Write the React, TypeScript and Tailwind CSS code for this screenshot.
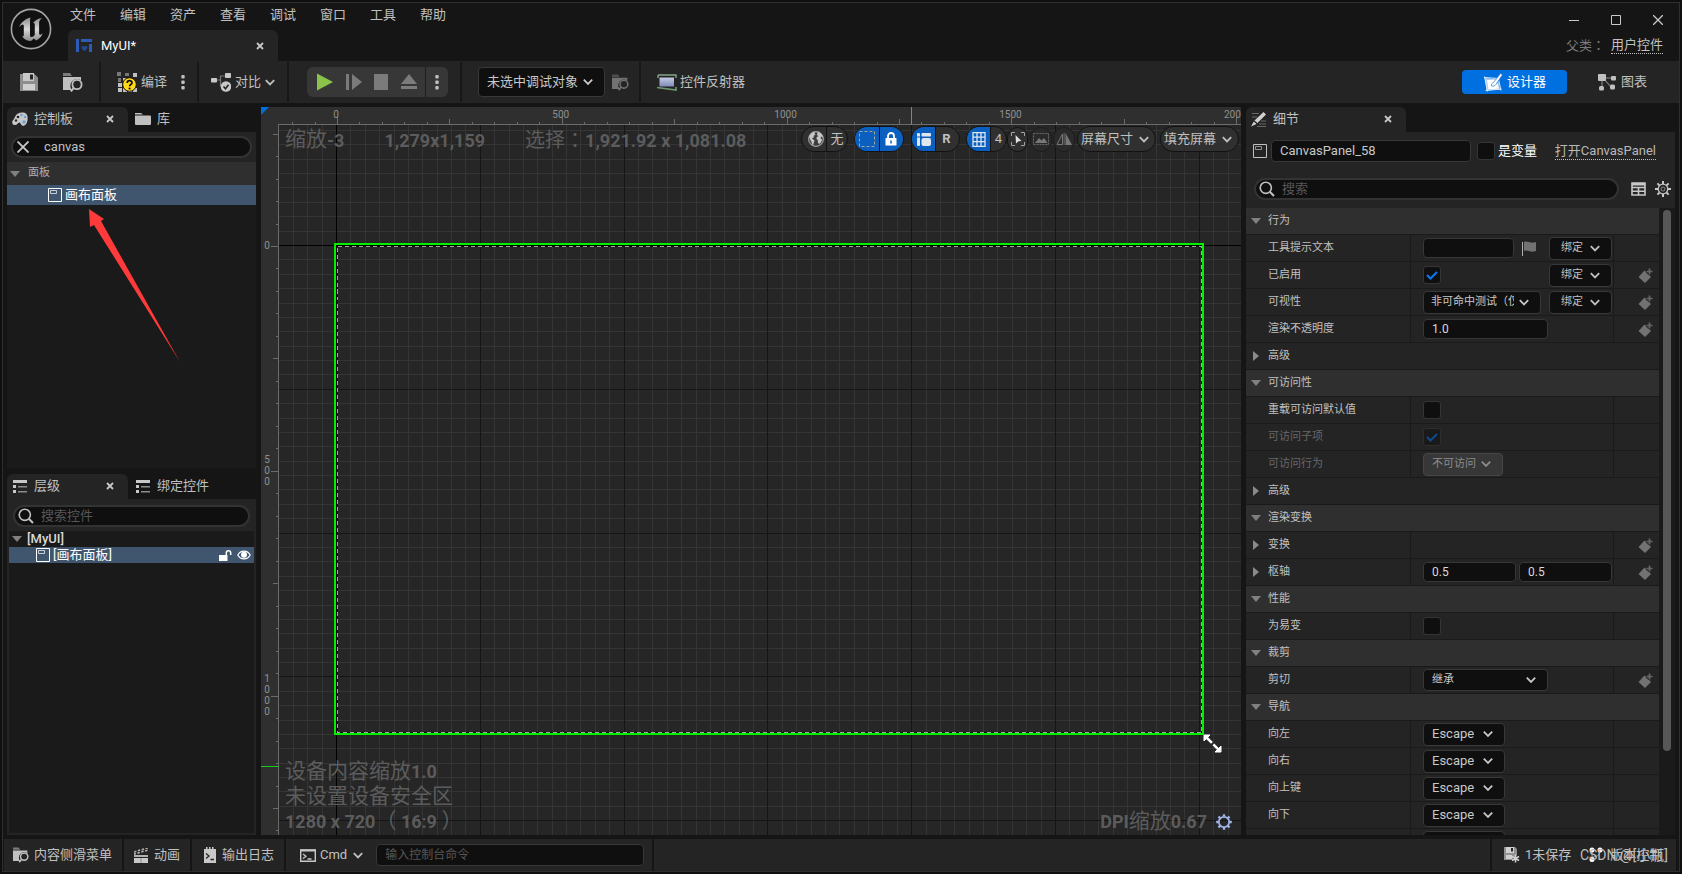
import React from 'react';

type IconProps = { className?: string };

/* ---------- icons ---------- */

const UnrealLogo = ({ className = '' }: IconProps) => (
  <svg viewBox="0 0 42 42" className={className} aria-hidden="true">
    <defs>
      <linearGradient id="logoFill" x1="0" y1="0" x2="0" y2="1">
        <stop offset="0" stopColor="#8d8d8d" />
        <stop offset="0.5" stopColor="#d8d8d8" />
        <stop offset="1" stopColor="#8a8a8a" />
      </linearGradient>
    </defs>
    <circle cx="21" cy="21" r="19.6" fill="#111" stroke="#a3a3a3" strokeWidth="1.6" />
    <path
      d="M20.5 9.5c-5 1.2-9.400 4.600-11.500 9.800 1.700-2 3.300-3 4.200-2.600.6.3.6 1 .6 2v8.300c0 1-.6 1.600-1.700 1.500 2.200 3.200 5.400 4.600 8.900 4.600l2.800-2.700 2.500 2c3.300-1.500 5.600-4.500 6.500-7.200-1.400 1.300-2.600 1.900-3.300 1.400-.4-.3-.4-.9-.4-1.700V14.600c0-1.900 1.200-3.400 3-4.700-4 .4-7.300 2.400-9 5.200.9-.3 1.700.1 1.700 1.500v10.200c-.6 1.100-1.600 2-3 2.200-1.300.1-1.800-.6-1.800-1.800V13.500c0-1.500.2-2.900.5-4z"
      fill="url(#logoFill)"
    />
  </svg>
);

const WidgetTabIcon = ({ className = '' }: IconProps) => (
  <svg viewBox="0 0 16 14" className={className} fill="#2d5bb8" aria-hidden="true">
    <path d="M0 0h3v13H0zM5 0h11v3H5zM13 5h3v8h-3z" />
    <path d="M5.500 8.500a1.600 1.600 0 0 1 3-.7 1.600 1.600 0 0 1 3 .7c0 1.500-1.600 2.500-3 3.800-1.400-1.300-3-2.300-3-3.800z" fill="#25498f" />
  </svg>
);

const CloseIcon = ({ className = '' }: IconProps) => (
  <svg viewBox="0 0 8 8" className={className} stroke="#c8c8c8" strokeWidth="1.8" aria-hidden="true">
    <path d="M1 1l6 6M7 1L1 7" />
  </svg>
);

const Chevron = ({ className = '' }: IconProps) => (
  <svg viewBox="0 0 10 7" className={`h-[7px] w-[10px] ${className}`} fill="none" stroke="currentColor" strokeWidth="1.8" aria-hidden="true">
    <path d="M.8 1.200L5 5.400l4.200-4.200" />
  </svg>
);

const Dots = ({ className = '' }: IconProps) => (
  <svg viewBox="0 0 4 16" className={`h-4 w-1 ${className}`} fill="#c0c0c0" aria-hidden="true">
    <rect x=".3" y="1" width="3.400" height="3.400" rx="1" />
    <rect x=".3" y="6.500" width="3.400" height="3.400" rx="1" />
    <rect x=".3" y="12" width="3.400" height="3.400" rx="1" />
  </svg>
);

const SaveIcon = ({ className = '' }: IconProps) => (
  <svg viewBox="0 0 18 18" className={className} aria-hidden="true">
    <path d="M0 1h14.500L18 4.500V18H0z" fill="#8e8e8e" />
    <path d="M3 0h11v8H3z" fill="#c8c8c8" />
    <path d="M10 1.500h3v5h-3z" fill="#242424" />
    <path d="M3 11h12v6H3z" fill="#d0d0d0" />
  </svg>
);

const BrowseIcon = ({ className = '' }: IconProps) => (
  <svg viewBox="0 0 20 19" className={className} aria-hidden="true">
    <path d="M0 0h7l2 3H0z" fill="#7b7b7b" />
    <path d="M0 4h18v4.500a6 6 0 0 0-9 8.500H0z" fill="#c0c0c0" />
    <circle cx="14" cy="11.500" r="5.600" fill="#242424" />
    <circle cx="14" cy="11.500" r="4.600" fill="none" stroke="#c0c0c0" strokeWidth="1.800" />
    <path d="M10.800 14.800L7.800 18.500" stroke="#c0c0c0" strokeWidth="2" />
  </svg>
);

const CompileIcon = ({ className = '' }: IconProps) => (
  <svg viewBox="0 0 20 20" className={className} aria-hidden="true">
    <g fill="#c0c0c0">
      <path d="M16 1h4v4h-4zM6 6h4v4H6zM1 11h4v4H1zM1 16h4v4H1zM6 16h4v4H6zM16 16h4v4h-4zM11 16h4v4h-4z" />
    </g>
    <path d="M0 0h4v4H0zM8 1h4v3H8zM1 6h3v4H1zM11 6h4v4h-4z" fill="#777" />
    <circle cx="12.500" cy="12.500" r="6.800" fill="#ffd816" stroke="#111" strokeWidth="1" />
    <path d="M10.200 11c0-3 4.800-3 4.800-.2 0 1.700-2.400 1.700-2.400 3.500" fill="none" stroke="#111" strokeWidth="1.800" />
    <circle cx="12.600" cy="16.500" r="1.100" fill="#111" />
  </svg>
);

const DiffIcon = ({ className = '' }: IconProps) => (
  <svg viewBox="0 0 20 19" className={className} aria-hidden="true">
    <path d="M5 7h4.500M9.500 7V3H14M9.500 7v6H11" fill="none" stroke="#777" strokeWidth="1.200" />
    <rect x="0" y="5" width="6" height="4.500" rx=".8" fill="#c8c8c8" />
    <rect x="14" y="0" width="6" height="5" rx=".8" fill="#c8c8c8" />
    <circle cx="15" cy="13.500" r="5.300" fill="#c8c8c8" />
    <path d="M12.500 13.500l2 2.200 3-4" fill="none" stroke="#242424" strokeWidth="1.600" />
  </svg>
);

const ReflectorIcon = ({ className = '' }: IconProps) => (
  <svg viewBox="0 0 20 17" className={className} aria-hidden="true">
    <defs>
      <linearGradient id="screen" x1="0" y1="0" x2="0" y2="1">
        <stop offset="0" stopColor="#c4cbe2" />
        <stop offset="1" stopColor="#7f8cb8" />
      </linearGradient>
    </defs>
    <path d="M1 1h18v3M1 4V1" fill="none" stroke="#87a487" strokeWidth="1.400" />
    <path d="M2.500 3.500h14.500v9H2.500z" fill="url(#screen)" />
    <path d="M0 13.500l19 2.500v-3" fill="none" stroke="#6d9a6d" strokeWidth="1.600" />
  </svg>
);

const DesignerIcon = ({ className = '' }: IconProps) => (
  <svg viewBox="0 0 20 19" className={className} aria-hidden="true">
    <path d="M2 5l13 1.500 2 10L3.500 17.500z" fill="#a9cdf2" />
    <path d="M4 7l9-.5 3 9-10.500 1z" fill="#fff" />
    <path d="M1 4.500l15 1M1.500 3.500l3 15M2.500 17.500l16-1.500M15 4l3 13.500" stroke="#dcebfb" strokeWidth="1" />
    <path d="M8.500 13c-.5-2 .8-3 2-3.400L17.500.5l2 1.200-6.600 9.700c-.9 1.500-2.500 2.100-4.400 1.600z" fill="#fff" stroke="#2273c9" strokeWidth=".7" />
  </svg>
);

const GraphIcon = ({ className = '' }: IconProps) => (
  <svg viewBox="0 0 18 17" className={className} fill="#c0c0c0" aria-hidden="true">
    <path d="M4 4h10M4 4v10M5 4l9 10" stroke="#8b8b8b" strokeWidth="1.100" />
    <rect x="0" y="0" width="8" height="7" rx="1" />
    <rect x="13" y="2" width="5" height="4.500" rx="1" />
    <rect x="1" y="12" width="5" height="4.500" rx="1.500" />
    <rect x="12" y="10.500" width="5" height="5" rx="1.500" />
  </svg>
);

const PaletteIcon = ({ className = '' }: IconProps) => (
  <svg viewBox="0 0 16 14" className={className} aria-hidden="true">
    <path d="M3 5C4 1.500 8 0 11.500.6 15 1.300 16 4 15.600 7.500 15.300 11 13.500 14 10.800 13.800c-2-.2-1.600-2.500-3.300-3.300C6 10 5.500 13 3 13 .5 13 0 11.500.3 9.600.7 8 2 7.500 3 5z" fill="#c8c8c8" />
    <g fill="#242424">
      <circle cx="6" cy="5" r="1.300" />
      <circle cx="4" cy="8.500" r="1.200" />
    </g>
    <g fill="#6f9fd8">
      <circle cx="9.500" cy="3" r="1.300" />
      <circle cx="13" cy="5" r="1.300" />
      <circle cx="12" cy="10" r="1.700" />
    </g>
  </svg>
);

const FolderIcon = ({ className = '' }: IconProps) => (
  <svg viewBox="0 0 16 12" className={className} fill="#c0c0c0" aria-hidden="true">
    <path d="M0 0h6l2 1.500H0zM0 2.500h15a1 1 0 0 1 1 1V11a1 1 0 0 1-1 1H1a1 1 0 0 1-1-1z" />
  </svg>
);

const ListIcon = ({ className = '' }: IconProps) => (
  <svg viewBox="0 0 14 13" className={className} aria-hidden="true">
    <path d="M0 0h14v3H0zM0 5h3v3H0zM0 10h3v3H0z" fill="#c8c8c8" />
    <path d="M5 6h9v1.500H5zM5 11h9v1.500H5z" fill="#8b8b8b" />
  </svg>
);

const SearchIcon = ({ className = '' }: IconProps) => (
  <svg viewBox="0 0 16 16" className={className} fill="none" stroke="#c0c0c0" strokeWidth="1.600" aria-hidden="true">
    <circle cx="6.800" cy="6.800" r="5.600" />
    <path d="M10.800 10.800l4.200 4.200" strokeWidth="2" />
  </svg>
);

const PanelIcon = ({ className = '' }: IconProps) => (
  <svg viewBox="0 0 14 14" className={className} fill="none" stroke="currentColor" aria-hidden="true">
    <path d="M.5.500h13v13H.500z" />
    <path d="M2.500 2.500h6v3h-6z" opacity=".7" />
  </svg>
);

const ArrowDown = () => (
  <svg viewBox="0 0 10 6" className="h-[6px] w-[10px]" fill="#808080" aria-hidden="true"><path d="M0 0h10L5 6z" /></svg>
);

const ArrowRight = () => (
  <svg viewBox="0 0 6 10" className="h-[10px] w-[6px]" fill="#8a8a8a" aria-hidden="true"><path d="M0 0v10l6-5z" /></svg>
);

const KeyframeIcon = () => (
  <svg viewBox="0 0 15 15" className="h-[15px] w-[15px]" aria-hidden="true">
    <path d="M6.500 2.500L13 9l-6 6-6.500-6z" fill="#727272" />
    <path d="M11.500 0v7M8 3.500h7" stroke="#242424" strokeWidth="3.400" />
    <path d="M11.500.5v6M8.500 3.500h6" stroke="#666" strokeWidth="1.700" />
  </svg>
);

const GearIcon = ({ className = '' }: IconProps) => (
  <svg viewBox="0 0 16 16" className={className} aria-hidden="true">
    <g stroke="currentColor" strokeWidth="2.400">
      <path d="M8 .2v2.500M8 13.300v2.500M.2 8h2.500M13.300 8h2.500M2.500 2.500l1.800 1.800M11.700 11.700l1.800 1.800M13.500 2.500l-1.800 1.800M4.300 11.700l-1.800 1.800" />
    </g>
    <circle cx="8" cy="8" r="5.200" fill="none" stroke="currentColor" strokeWidth="1.800" />
  </svg>
);

const GlobeIcon = ({ className = '' }: IconProps) => (
  <svg viewBox="0 0 16 16" className={className} aria-hidden="true">
    <circle cx="8" cy="8" r="7.400" fill="#3c3c3c" stroke="#a8a8a8" strokeWidth="1.100" />
    <path d="M1.200 6C2 3 4.500 1 7.200.8L6.500 2.500l1 1-2 1.500.5 1.500-2 .5L5 8.500l1.500.8-.5 2L5 14.500C3.500 13 3.800 10.500 2.600 9.500z" fill="#c6c6c6" />
    <path d="M9.500 1c3 .6 5.200 3 5.800 6l-1.800-1.500L12.500 7l1.700 1.500-1 2.500-1.700 2-1.500-1-.3-3L8.500 8l.2-2 2-1-1.700-.8z" fill="#c6c6c6" />
  </svg>
);

/* ---------- shared controls ---------- */

const Separator = ({ className = '' }: IconProps) => <span className={`h-10 w-[2px] shrink-0 bg-[#181818] ${className}`} />;

type SelectProps = { id: string; value: string; label?: string; width: string; height?: string; big?: boolean; disabled?: boolean };

const Select = ({ id, value, label, width, height = 'h-[23px]', big, disabled }: SelectProps) => (
  <div className={`relative ${width}`}>
    <select
      id={id}
      aria-label={label}
      disabled={disabled}
      defaultValue={value}
      className={`block w-full appearance-none truncate rounded border pr-6 pl-2 ${height} ${big ? 'text-[13px]' : 'text-[11px]'} ${
        disabled ? 'border-[#464646] bg-[#373737] text-[#8d8d8d] opacity-100' : 'border-[#383838] bg-[#0f0f0f] text-[#c8c8c8]'
      }`}
    >
      <option>{value}</option>
    </select>
    <Chevron className={`pointer-events-none absolute top-1/2 right-3 -translate-y-1/2 ${disabled ? 'text-[#8d8d8d]' : 'text-[#c8c8c8]'}`} />
  </div>
);

const Check = ({ id, checked, disabled }: { id: string; checked?: boolean; disabled?: boolean }) => (
  <span className="relative h-[18px] w-[18px] shrink-0">
    <input
      id={id}
      type="checkbox"
      defaultChecked={checked}
      disabled={disabled}
      className={`peer block h-[18px] w-[18px] appearance-none rounded-[3px] border ${disabled ? 'border-[#2e2e2e] bg-[#191919]' : 'border-[#353535] bg-[#0f0f0f]'}`}
    />
    <svg viewBox="0 0 12 9" className={`pointer-events-none absolute top-[5px] left-[3px] hidden h-[9px] w-3 peer-checked:block ${disabled ? 'text-[#0d4a8a]' : 'text-[#0a78e8]'}`} fill="none" stroke="currentColor" strokeWidth="2.200" aria-hidden="true">
      <path d="M1 4l3.500 3.500L11 1" />
    </svg>
  </span>
);

const TextField = ({ id, value = '', label, width }: { id: string; value?: string; label?: string; width: string }) => (
  <input id={id} aria-label={label} defaultValue={value} className={`h-5 rounded border border-[#373737] bg-[#0f0f0f] px-2 text-xs text-[#d8d8d8] ${width}`} />
);

const BindButton = () => (
  <button className="flex h-[23px] w-[63px] items-center justify-center gap-[7px] rounded border border-[#383838] bg-[#0f0f0f] text-[11px] text-[#c0c0c0]">
    绑定
    <Chevron />
  </button>
);

const SearchBox = ({ placeholder, className = '' }: { placeholder: string; className?: string }) => (
  <label className={`flex h-[22px] items-center gap-[7px] rounded-full border-2 border-[#333] bg-[#0f0f0f] pr-3 pl-[3px] ${className}`}>
    <SearchIcon className="h-4 w-4 shrink-0" />
    <input aria-label={placeholder} placeholder={placeholder} className="w-full min-w-0 bg-transparent pb-px text-[13px] leading-4 text-[#c0c0c0] outline-none placeholder:text-[#575757]" />
  </label>
);

const PanelTab = ({ icon, title, width = 'w-[121px]' }: { icon: React.ReactNode; title: string; width?: string }) => (
  <div className={`flex h-[25px] items-center rounded-t-md bg-[#242424] pr-[14px] pb-px pl-[5px] text-[13px] text-[#c0c0c0] ${width}`}>
    {icon}
    <span className="ml-[6px] flex-1">{title}</span>
    <button aria-label={`关闭${title}`}><CloseIcon className="h-2 w-2" /></button>
  </div>
);

/* ---------- header ---------- */

const menus = ['文件', '编辑', '资产', '查看', '调试', '窗口', '工具', '帮助'];

const TitleBar = () => (
  <header className="flex h-[58px] shrink-0 pl-[7px]">
    <UnrealLogo className="mt-[5px] h-[42px] w-[42px]" />
    <div className="ml-4 flex flex-1 flex-col justify-between">
      <nav className="flex h-6 items-center gap-6 pl-[2px] text-[13px] text-[#c0c0c0]">
        {menus.map((m) => (
          <button key={m}>{m}</button>
        ))}
      </nav>
      <div className="flex h-[31px] w-[210px] items-center rounded-t-md bg-[#242424] pr-[14px] pl-2 text-[13px] text-white">
        <WidgetTabIcon className="h-[14px] w-4" />
        <span className="ml-[9px] flex-1">MyUI*</span>
        <button aria-label="关闭 MyUI"><CloseIcon className="h-2 w-2" /></button>
      </div>
    </div>
    <div className="flex flex-col items-end pr-4">
      <div className="flex h-[34px] items-center gap-8 text-[#c8c8c8]">
        <button aria-label="最小化">
          <svg viewBox="0 0 10 10" className="h-[10px] w-[10px]" fill="none" stroke="currentColor"><path d="M0 5.500h10" /></svg>
        </button>
        <button aria-label="最大化">
          <svg viewBox="0 0 10 10" className="h-[10px] w-[10px]" fill="none" stroke="currentColor"><path d="M.5.500h9v9h-9z" /></svg>
        </button>
        <button aria-label="关闭">
          <svg viewBox="0 0 10 10" className="h-[10px] w-[10px]" fill="none" stroke="currentColor" strokeWidth="1.300"><path d="M0 0l10 10M10 0L0 10" /></svg>
        </button>
      </div>
      <div className="flex items-center gap-[6px] text-[13px] leading-4">
        <span className="text-[#7a7a7a]">父类<span className="font-['Noto_Sans_CJK_TC',sans-serif]">：</span></span>
        <a href="#" className="border-b border-dotted border-[#c0c0c0] text-[#c0c0c0]">用户控件</a>
      </div>
    </div>
  </header>
);

const Toolbar = () => (
  <div className="flex h-[42px] shrink-0 items-center bg-[#242424] text-[13px] text-[#c0c0c0]">
    <button aria-label="保存" className="ml-[17px]"><SaveIcon className="h-[18px] w-[18px]" /></button>
    <button aria-label="浏览" className="ml-[25px]"><BrowseIcon className="h-[19px] w-5" /></button>
    <Separator className="ml-4" />
    <button className="ml-4 flex items-center gap-1">
      <CompileIcon className="h-5 w-5" />编译
    </button>
    <button aria-label="编译选项" className="ml-[14px]"><Dots /></button>
    <Separator className="ml-[12px]" />
    <button className="ml-3 flex items-center gap-1">
      <DiffIcon className="h-[19px] w-5" />对比<Chevron />
    </button>
    <Separator className="ml-3" />
    <div className="ml-[18px] flex h-[30px] items-center rounded-md bg-[#373737]">
      <button aria-label="播放" className="ml-[10px]">
        <svg viewBox="0 0 16 18" className="h-[18px] w-4" fill="#8bc34a"><path d="M0 .5L16 9 0 17.500z" /></svg>
      </button>
      <button aria-label="跳过" className="ml-[13px]">
        <svg viewBox="0 0 16 16" className="h-4 w-4" fill="#7b7b7b"><path d="M0 0h3v16H0zM6 0l10 8-10 8z" /></svg>
      </button>
      <button aria-label="停止" className="ml-3">
        <svg viewBox="0 0 14 16" className="h-4 w-[14px]" fill="#7b7b7b"><path d="M0 0h14v16H0z" /></svg>
      </button>
      <button aria-label="弹出" className="ml-[13px]">
        <svg viewBox="0 0 16 16" className="h-4 w-4" fill="#7b7b7b"><path d="M8 0l8 10H0zM0 12h16v3H0z" /></svg>
      </button>
      <span className="ml-2 h-[30px] w-px bg-[#1f1f1f]" />
      <button aria-label="播放选项" className="flex w-[22px] justify-center"><Dots /></button>
    </div>
    <Separator className="ml-3" />
    <div className="ml-4">
      <Select id="debug-target" label="调试对象" value="未选中调试对象" width="w-[127px]" height="h-[30px]" big />
    </div>
    <button aria-label="浏览调试对象" className="ml-[7px] opacity-50"><BrowseIcon className="h-[17px] w-[17px]" /></button>
    <Separator className="ml-[10px]" />
    <button className="ml-4 flex items-center gap-[3px]">
      <ReflectorIcon className="h-[17px] w-5" />控件反射器
    </button>
    <button className="ml-auto flex h-6 w-[105px] items-center justify-center gap-1 rounded bg-[#0070e0] text-white">
      <DesignerIcon className="h-[19px] w-5" />设计器
    </button>
    <button className="mr-8 ml-[31px] flex items-center gap-[5px]">
      <GraphIcon className="h-[17px] w-[18px]" />图表
    </button>
  </div>
);

/* ---------- left column ---------- */

const PalettePanel = () => (
  <section className="relative flex h-[361px] shrink-0 flex-col">
    <div className="flex text-[13px] text-[#c0c0c0]">
      <PanelTab icon={<PaletteIcon className="h-[14px] w-4" />} title="控制板" />
      <button className="flex items-center gap-[6px] pb-px pl-[7px]">
        <FolderIcon className="h-3 w-4" />库
      </button>
    </div>
    <div className="bg-[#242424] px-1 pt-1 pb-[4px]">
      <label className="flex h-[22px] items-center gap-[15px] rounded-full border-2 border-[#333] bg-[#0f0f0f] pl-1">
        <svg viewBox="0 0 12 12" className="h-3 w-3 shrink-0" stroke="#c8c8c8" strokeWidth="1.800" aria-hidden="true"><path d="M.5.500l11 11M11.500.5l-11 11" /></svg>
        <input aria-label="搜索控制板" defaultValue="canvas" className="w-full bg-transparent pb-px text-[13px] leading-4 text-[#c0c0c0] outline-none" />
      </label>
    </div>
    <div className="flex h-[23px] items-center gap-2 bg-[#2f2f2f] pl-[3px] text-[11px] text-[#b0b0b0]">
      <ArrowDown />面板
    </div>
    <div className="flex h-5 items-center gap-[3px] bg-[#40566f] pl-[41px] text-[13px] text-white">
      <PanelIcon className="h-[14px] w-[14px]" />画布面板
    </div>
    <div className="flex-1 bg-[#1a1a1a]" />
    {/* pointer to the palette entry */}
    <svg viewBox="0 0 92 154" className="absolute top-[102px] left-[81px] h-[154px] w-[92px]" fill="#fe3a3a" aria-hidden="true">
      <path d="M1 0l15 10-3 2 79 141-86-137-4 2z" />
    </svg>
  </section>
);

const HierarchyPanel = () => (
  <section className="mt-[6px] flex min-h-0 flex-1 flex-col">
    <div className="flex text-[13px] text-[#c0c0c0]">
      <PanelTab icon={<ListIcon className="mr-px ml-px h-[13px] w-[14px]" />} title="层级" />
      <button className="flex items-center gap-[7px] pb-px pl-2">
        <ListIcon className="h-[13px] w-[14px]" />绑定控件
      </button>
    </div>
    <div className="flex flex-1 flex-col bg-[#242424] px-[2px] pt-[6px] pb-[2px]">
      <SearchBox placeholder="搜索控件" className="mx-1" />
      <div className="mt-1 flex-1 bg-[#1a1a1a] text-[13px] text-white">
        <div className="flex h-4 items-center gap-[5px] pl-[3px] font-medium text-[#d8d8d8]">
          <ArrowDown />[MyUI]
        </div>
        <div className="flex h-4 items-center gap-[3px] bg-[#40566f] pr-[3px] pl-[27px]">
          <PanelIcon className="h-[14px] w-[14px]" />
          <span className="flex-1">[画布面板]</span>
          <button aria-label="锁定">
            <svg viewBox="0 0 13 11" className="h-[11px] w-[13px]" fill="#fff"><path d="M0 5h8.500v6H0z" /><path d="M7.300 5V3a2.200 2.200 0 0 1 4.400 0v2" fill="none" stroke="#fff" strokeWidth="1.500" /></svg>
          </button>
          <button aria-label="可见性" className="ml-[2px]">
            <svg viewBox="0 0 14 10" className="h-[10px] w-[14px]" fill="none" stroke="#fff" strokeWidth="1.200"><path d="M.8 5C3.500-.2 10.500-.2 13.200 5 10.500 10.200 3.500 10.200.8 5z" /><circle cx="7" cy="4.800" r="2.400" fill="#fff" /></svg>
          </button>
        </div>
      </div>
    </div>
  </section>
);

/* ---------- designer canvas ---------- */

const RULER = 18;
const ORIGIN = { x: 75, y: 138 };
const MAJOR = 143.8;
const TICK = 22.48;
const range = (from: number, to: number) => Array.from({ length: to - from + 1 }, (_, i) => from + i);

const CanvasGrid = () => {
  const cols = range(-3, 180);
  const rows = range(-8, 110);
  const lineColor = (i: number) => (i === 0 ? '#000' : i % 10 === 0 ? '#151515' : '#353535');
  const sorted = (list: number[]) => [...list].sort((a, b) => Number(a % 10 === 0) - Number(b % 10 === 0));
  const tickLength = (i: number) => (i % 10 === 0 ? 7 : i % 5 === 0 ? 5 : 2);

  return (
    <svg className="absolute inset-0 h-full w-full" aria-hidden="true">
      <rect width="100%" height="100%" fill="#262626" />
      <g shapeRendering="crispEdges">
        {sorted(cols).map((i) => (
          <rect key={`c${i}`} x={Math.round(ORIGIN.x + (i * MAJOR) / 10)} y="0" width="1" height="100%" fill={lineColor(i)} />
        ))}
        {sorted(rows).map((i) => (
          <rect key={`r${i}`} x="0" y={Math.round(ORIGIN.y + (i * MAJOR) / 10)} width="100%" height="1" fill={lineColor(i)} />
        ))}
        {[0, 10, 20, 30, 40, 50, 60].map((i) => (
          <rect key={`m${i}`} x={Math.round(ORIGIN.x + (i * MAJOR) / 10)} y="0" width="1" height="100%" fill={lineColor(i)} />
        ))}

        {/* root panel outline */}
        <rect x="76.500" y="139.500" width="864" height="486" fill="none" stroke="#111" />
        <rect x="76.500" y="139.500" width="864" height="486" fill="none" stroke="#a4a4a4" strokeDasharray="4 3" />
        <rect x="74" y="137" width="868" height="490" fill="none" stroke="#00f000" strokeWidth="2" />

        {/* rulers */}
        <rect width="100%" height={RULER} fill="#2f2f2f" />
        <rect width={RULER} height="100%" fill="#2f2f2f" />
        <rect x={RULER - 1} y={RULER - 1} width="100%" height="1" fill="#6b6b6b" />
        <rect x={RULER - 1} y={RULER - 1} width="1" height="100%" fill="#6b6b6b" />
        {range(-2, 110).map((i) => (
          <rect key={`tx${i}`} x={Math.round(76 + i * TICK)} y={RULER - 1 - tickLength(i)} width="1" height={tickLength(i)} fill="#6b6b6b" />
        ))}
        {range(-5, 60).map((i) => (
          <rect key={`ty${i}`} x={RULER - 1 - tickLength(i)} y={Math.round(139 + i * TICK)} width={tickLength(i)} height="1" fill="#6b6b6b" />
        ))}
        <rect x="650" y="0" width="1" height={RULER} fill="#1fc81f" />
        <rect x="0" y="659" width={RULER} height="1" fill="#1fc81f" />
      </g>
      <path d="M0 0h8L0 8z" fill="#0070e0" />
      <g fill="#8f8f8f" fontSize="10" textAnchor="middle">
        {[0, 500, 1000, 1500, 2000].map((n) => (
          <text key={n} x={75 + n * 0.4496} y="11">{n}</text>
        ))}
        {[0, 500, 1000].map((n) => {
          const digits = String(n).split('');
          return digits.map((d, k) => (
            <text key={`${n}-${k}`} x="6" y={142 + n * 0.4496 + (k - (digits.length - 1) / 2) * 11}>{d}</text>
          ));
        })}
      </g>
      {/* resize cursor */}
      <g transform="translate(943 628)" stroke="#fff" fill="#fff">
        <path d="M3 3l12 12" strokeWidth="2.500" strokeDasharray="7 2" />
        <path d="M0 0h6L0 6zM17 17v-6l-6 6z" />
      </g>
    </svg>
  );
};

const pill = 'flex h-[26px] items-center overflow-hidden rounded-full border border-[#121212] bg-[#303030]';
const half = 'flex h-full flex-1 items-center justify-center';

const ViewportToolbar = () => (
  <div className="absolute top-[19px] right-[2px] flex items-center text-[13px] text-[#c0c0c0]">
    <div className={`${pill} w-[47px]`}>
      <button aria-label="本地化预览" className={`${half} border-r border-[#121212] pl-[3px]`}>
        <GlobeIcon className="h-4 w-4" />
      </button>
      <button className="flex h-full w-5 items-center justify-center">无</button>
    </div>
    <div className={`${pill} ml-[6px] w-[50px]`}>
      <button aria-label="虚线轮廓" className={`${half} border-r border-[#121212] bg-[#0b5fbf]`}>
        <svg viewBox="0 0 16 16" className="h-4 w-4" fill="none" stroke="#a5a595" strokeDasharray="3 2"><path d="M.5.500h15v15H.500z" /></svg>
      </button>
      <button aria-label="遵循锁定" className={`${half} bg-[#0b5fbf]`}>
        <svg viewBox="0 0 12 14" className="h-[14px] w-3" fill="none" stroke="#fff" strokeWidth="1.800"><path d="M3 6V4a3 3 0 0 1 6 0v2" /><path d="M.5 6h11v7.500H.5z" fill="#fff" stroke="none" /><path d="M6 8.500v3" stroke="#0b5fbf" strokeWidth="1.500" /></svg>
      </button>
    </div>
    <div className={`${pill} ml-[7px] w-[49px]`}>
      <button aria-label="布局变换" className={`${half} border-r border-[#121212] bg-[#0b5fbf]`}>
        <svg viewBox="0 0 14 13" className="h-[13px] w-[14px]" fill="#dfe6ee"><rect width="3" height="13" rx="1" /><path d="M0 3.500h3v1H0z" fill="#0b5fbf" /><rect x="4.500" width="9.500" height="3.500" rx="1" /><rect x="4.500" y="5" width="9.500" height="8" rx="2" /></svg>
      </button>
      <button className="flex h-full w-[23px] items-center justify-center pr-[2px] font-bold">R</button>
    </div>
    <div className={`${pill} ml-[6px] w-[41px]`}>
      <button aria-label="网格对齐" className="flex h-full w-6 items-center justify-center border-r border-[#121212] bg-[#0b5fbf]">
        <svg viewBox="0 0 14 15" className="h-[15px] w-[14px]" fill="none" stroke="#dfe6ee" strokeWidth="1.300"><path d="M1 .7h12v13.600H1zM5 .7v13.600M9 .7v13.600M1 5.200h12M1 9.700h12" /></svg>
      </button>
      <button className={half}>4</button>
    </div>
    <button aria-label="缩放至适合" className="flex h-[25px] w-[21px] items-center justify-center rounded-full border border-[#121212] bg-[#303030]">
      <svg viewBox="0 0 14 14" className="h-[14px] w-[14px]" fill="none" stroke="#a0a0a0"><path d="M.5 4V.5H4M10 .5h3.500V4M13.500 10v3.500H10M4 13.500H.5V10" /><path d="M4.500 3l6 6-3 .2L5 11.500z" fill="#e0e0e0" stroke="none" /></svg>
    </button>
    <button aria-label="背景图像" className="ml-[2px] flex h-[25px] w-[22px] items-center justify-center rounded-full border border-[#1d1d1d] bg-[#2a2a2a]">
      <svg viewBox="0 0 16 12" className="h-3 w-4" fill="#777"><path d="M.5.500h15v11H.500z" fill="none" stroke="#6a6a6a" strokeDasharray="2 1" /><path d="M2 10l4-5 2.500 2.500L11 5l3.500 5z" /></svg>
    </button>
    <button aria-label="翻转" className="ml-px flex h-[25px] w-[22px] items-center justify-center rounded-full border border-[#1d1d1d] bg-[#2a2a2a]">
      <svg viewBox="0 0 16 12" className="h-3 w-4" fill="#777"><path d="M6.500 1v10.500H1z" fill="none" stroke="#777" /><path d="M9.500 0v12H16zM7.700 0h.8v12h-.8z" /></svg>
    </button>
    <button className={`${pill} ml-[2px] w-[79px] justify-center gap-[6px] pr-[3px]`}>屏幕尺寸<Chevron /></button>
    <button className={`${pill} ml-1 w-[79px] justify-center gap-[6px] pr-[3px]`}>填充屏幕<Chevron /></button>
  </div>
);

const DesignerView = () => (
  <main className="relative min-w-0 flex-1 overflow-hidden">
    <CanvasGrid />
    <div className="absolute top-[21px] left-6 flex h-6 items-center text-[18px] whitespace-pre text-[#5c5c5c]">
      <span className="text-[21px]">缩放</span><b>-3</b>
      <b className="ml-10">1,279x1,159</b>
      <span className="ml-10 flex text-[20px]">选择<span className="font-['Noto_Sans_CJK_TC',sans-serif]">：</span></span>
      <b>1,921.92 x 1,081.08</b>
    </div>
    <ViewportToolbar />
    <div className="absolute bottom-px left-6 text-[18px] leading-[25px] text-[#5c5c5c]">
      <p><span className="text-[21px]">设备内容缩放</span><b>1.0</b></p>
      <p className="text-[21px]">未设置设备安全区</p>
      <p><b>1280 x 720</b><span className="text-[21px]">（</span><b> 16:9 </b><span className="text-[21px]">）</span></p>
    </div>
    <div className="absolute right-[9px] bottom-px flex items-center gap-[9px] text-[18px] leading-[25px] text-[#5c5c5c]">
      <span><b>DPI</b><span className="text-[21px]">缩放</span><b>0.67</b></span>
      <button aria-label="DPI 设置" className="text-[#9fb3e6]"><GearIcon className="h-4 w-4" /></button>
    </div>
  </main>
);

/* ---------- details ---------- */

type Row =
  | { kind: 'header'; label: string }
  | { kind: 'advanced'; label: string }
  | { kind: 'prop'; label: string; id?: string; control?: React.ReactNode; dim?: boolean; keyable?: boolean; expand?: boolean };

const navRow = (label: string, id: string): Row => ({
  kind: 'prop',
  label,
  id,
  control: <Select id={id} value="Escape" width="w-[82px]" big />,
});

const rows: Row[] = [
  { kind: 'header', label: '行为' },
  {
    kind: 'prop',
    label: '工具提示文本',
    id: 'tooltip',
    control: (
      <>
        <TextField id="tooltip" width="w-[91px]" />
        <button aria-label="本地化" className="ml-2">
          <svg viewBox="0 0 14 15" className="h-[15px] w-[14px]"><path d="M.5 1v14" stroke="#b0b0b0" /><path d="M2 1c4-1.500 5 2 12 0v9c-7 2-8-1.500-12 0z" fill="#727272" /></svg>
        </button>
        <span className="ml-auto"><BindButton /></span>
      </>
    ),
  },
  {
    kind: 'prop',
    label: '已启用',
    id: 'enabled',
    keyable: true,
    control: (
      <>
        <Check id="enabled" checked />
        <span className="ml-auto"><BindButton /></span>
      </>
    ),
  },
  {
    kind: 'prop',
    label: '可视性',
    id: 'visibility',
    keyable: true,
    control: (
      <>
        <div className="relative w-[118px]">
          <select id="visibility" className="block h-[23px] w-full appearance-none overflow-hidden rounded border border-[#383838] bg-[#0f0f0f] pr-[26px] pl-[7px] text-[11px] text-[#c8c8c8]">
            <option>非可命中测试（仅自身）</option>
          </select>
          <Chevron className="pointer-events-none absolute top-2 right-3 text-[#c8c8c8]" />
        </div>
        <span className="ml-auto"><BindButton /></span>
      </>
    ),
  },
  { kind: 'prop', label: '渲染不透明度', id: 'opacity', keyable: true, control: <TextField id="opacity" value="1.0" width="w-[125px]" /> },
  { kind: 'advanced', label: '高级' },
  { kind: 'header', label: '可访问性' },
  { kind: 'prop', label: '重载可访问默认值', id: 'override', control: <Check id="override" /> },
  { kind: 'prop', label: '可访问子项', id: 'children', dim: true, control: <Check id="children" checked disabled /> },
  { kind: 'prop', label: '可访问行为', id: 'access', dim: true, control: <Select id="access" value="不可访问" width="w-[80px]" disabled /> },
  { kind: 'advanced', label: '高级' },
  { kind: 'header', label: '渲染变换' },
  { kind: 'prop', label: '变换', expand: true, keyable: true },
  {
    kind: 'prop',
    label: '枢轴',
    id: 'pivot-x',
    expand: true,
    keyable: true,
    control: (
      <>
        <TextField id="pivot-x" value="0.5" width="w-[93px]" />
        <TextField id="pivot-y" label="枢轴 Y" value="0.5" width="ml-[3px] w-[93px]" />
      </>
    ),
  },
  { kind: 'header', label: '性能' },
  { kind: 'prop', label: '为易变', id: 'volatile', control: <Check id="volatile" /> },
  { kind: 'header', label: '裁剪' },
  { kind: 'prop', label: '剪切', id: 'clipping', keyable: true, control: <Select id="clipping" value="继承" width="w-[125px]" height="h-[22px]" /> },
  { kind: 'header', label: '导航' },
  navRow('向左', 'nav-left'),
  navRow('向右', 'nav-right'),
  navRow('向上键', 'nav-up'),
  navRow('向下', 'nav-down'),
  navRow('下一页', 'nav-next'),
];

const DetailRow = ({ row }: { row: Row }) => {
  const base = 'flex h-[27px] shrink-0 items-center border-b border-[#1a1a1a] text-[11px]';
  if (row.kind !== 'prop') {
    const header = row.kind === 'header';
    return (
      <div className={`${base} text-[#c0c0c0] ${header ? 'bg-[#2f2f2f]' : 'bg-[#242424]'}`}>
        <span className="flex w-[22px] justify-center pr-[2px]">{header ? <ArrowDown /> : <ArrowRight />}</span>
        {row.label}
      </div>
    );
  }
  return (
    <div className={`${base} bg-[#242424] ${row.dim ? 'text-[#686868]' : 'text-[#c0c0c0]'}`}>
      <div className="flex h-full w-[165px] items-center border-r border-[#1a1a1a]">
        <span className="flex w-[22px] justify-center pr-[2px]">{row.expand && <ArrowRight />}</span>
        <label htmlFor={row.id}>{row.label}</label>
      </div>
      <div className="flex h-full flex-1 items-center border-r border-[#1a1a1a] pr-px pl-3">{row.control}</div>
      <div className="flex w-[45px] justify-end pr-[6px]">{row.keyable && <button aria-label="添加关键帧" className="block"><KeyframeIcon /></button>}</div>
    </div>
  );
};

const DetailsPanel = () => (
  <aside className="flex min-h-0 w-[429px] shrink-0 flex-col">
    <PanelTab
      width="w-[160px]"
      title="细节"
      icon={
        <svg viewBox="0 0 16 15" className="h-[15px] w-4" aria-hidden="true">
          <path d="M1 1.500h7M1 5h5M10 9h5M8 12h7M6 14.500h9" stroke="#686868" strokeWidth="1.200" />
          <path d="M12.500 0L15 2.500 6.500 11l-3-2.500zM2.800 9.500L5.500 12 0 14.500z" fill="#d0d0d0" />
        </svg>
      }
    />
    <div className="bg-[#242424] pt-2 pb-2">
      <div className="flex h-[22px] items-center pl-[7px] text-[13px]">
        <PanelIcon className="h-[14px] w-[14px] shrink-0 text-[#c0c0c0]" />
        <input aria-label="控件名称" defaultValue="CanvasPanel_58" className="ml-1 h-[22px] w-[200px] rounded border border-[#373737] bg-[#0f0f0f] px-2 pb-[2px] text-[13px] text-[#c8c8c8]" />
        <span className="ml-[6px] flex items-center gap-[3px]">
          <Check id="is-variable" />
          <label htmlFor="is-variable" className="text-white">是变量</label>
        </span>
        <a href="#" className="mr-[19px] ml-auto border-b border-dotted border-[#c0c0c0] leading-4 text-[#b8b8b8]">打开CanvasPanel</a>
      </div>
      <div className="mt-4 flex h-[22px] items-center pr-1 pl-2">
        <SearchBox placeholder="搜索" className="flex-1" />
        <button aria-label="表格视图" className="ml-3">
          <svg viewBox="0 0 15 14" className="h-[14px] w-[15px]" fill="none" stroke="#c8c8c8" strokeWidth="1.600"><path d="M1 1h13v12H1zM1 5.500h13M1 9.200h13M7.500 5v8" /><path d="M1 1h13v2.500H1z" fill="#c8c8c8" stroke="none" /></svg>
        </button>
        <button aria-label="设置" className="ml-[9px] text-[#c8c8c8]">
          <svg viewBox="0 0 16 16" className="h-4 w-4" fill="none" stroke="currentColor"><path d="M8 0v3M8 13v3M0 8h3M13 8h3M2.400 2.400l2 2M11.600 11.600l2 2M13.600 2.400l-2 2M4.400 11.600l-2 2" strokeWidth="2" /><circle cx="8" cy="8" r="4.800" strokeWidth="1.300" /><circle cx="8" cy="8" r="2" stroke="#8a8a8a" /></svg>
        </button>
      </div>
    </div>
    <div className="flex min-h-0 flex-1 bg-[#1a1a1a]">
      <div className="flex min-w-0 flex-1 flex-col overflow-hidden">
        {rows.map((row, i) => (
          <DetailRow key={i} row={row} />
        ))}
      </div>
      <div className="w-4 pt-[2px] pl-1">
        <div className="h-[541px] w-2 rounded-full bg-[#575757]" />
      </div>
    </div>
  </aside>
);

/* ---------- status bar ---------- */

const seg = 'flex h-full items-center bg-[#242424]';

const StatusBar = () => (
  <footer className="relative flex h-8 shrink-0 gap-[2px] pr-[3px] pl-px text-[13px] text-[#c0c0c0]">
    <button className={`${seg} w-[118px] gap-[5px] pl-[9px]`}><BrowseIcon className="h-4 w-4" />内容侧滑菜单</button>
    <button className={`${seg} w-[66px] gap-[5px] pl-[10px]`}>
      <svg viewBox="0 0 15 15" className="h-[15px] w-[15px]" aria-hidden="true"><path d="M0 4l13-4 .6 2.200L.6 6z" fill="none" stroke="#b0b0b0" strokeDasharray="2.500 1.500" strokeWidth="1.600" /><path d="M0 7h14v2H0z" fill="#b0b0b0" /><path d="M0 10h14v5H0z" fill="#c8c8c8" /><path d="M7 10v5" stroke="#8a8a8a" /></svg>
      动画
    </button>
    <button className={`${seg} w-[92px] gap-[6px] pl-3`}>
      <svg viewBox="0 0 12 16" className="h-4 w-3" aria-hidden="true"><path d="M0 2h2V0h1.500v2H5V0h1.500v2H8V0h1.500v2H12v14H0z" fill="#c8c8c8" /><path d="M2 6.500l3 2.500-3 2.500M6.500 12.500H10" fill="none" stroke="#242424" strokeWidth="1.300" /></svg>
      输出日志
    </button>
    <div className={`${seg} w-[366px] pl-[14px]`}>
      <button className="flex items-center gap-1">
        <svg viewBox="0 0 16 13" className="h-[13px] w-4" fill="none" stroke="#c8c8c8" aria-hidden="true"><path d="M.7 1h14.600v11.300H.7z" strokeWidth="1.400" /><path d="M0 1.500h16" strokeWidth="2" /><path d="M3 5l3 2.300-3 2.300M7.500 10h4" strokeWidth="1.300" /></svg>
        Cmd<Chevron className="ml-[2px]" />
      </button>
      <input aria-label="控制台命令" placeholder="输入控制台命令" className="ml-[13px] h-[22px] w-[268px] rounded border border-[#373737] bg-[#0f0f0f] px-2 text-xs text-[#c0c0c0] placeholder:text-[#575757]" />
    </div>
    <div className={`${seg} flex-1`} />
    <div className={`${seg} w-[184px] pl-3`}>
      <button className="flex items-center gap-[5px]">
        <svg viewBox="0 0 16 16" className="h-4 w-4" aria-hidden="true"><path d="M0 0h11l2 2v6l-4 3v2H0z" fill="#909090" /><path d="M2 0h8v6H2zM2 8h6v4H2z" fill="#d0d0d0" /><path d="M7 1h2v3.500H7z" fill="#242424" /><path d="M11.500 7.500v8M8 9.500l7 4M15 9.500l-7 4" stroke="#d0d0d0" strokeWidth="1.600" /></svg>
        1未保存
      </button>
      <button className="ml-[18px] flex items-center gap-[7px]">
        <svg viewBox="0 0 14 16" className="h-4 w-[14px]" fill="#fff" aria-hidden="true"><path d="M3 3v10M3 10c5 0 8-2 8-6" fill="none" stroke="#9a9a9a" /><circle cx="3" cy="3" r="2.500" /><circle cx="11" cy="3" r="2.500" /><circle cx="3" cy="12.500" r="2.500" /></svg>
        版本控制
      </button>
    </div>
    <span className="absolute right-[11px] bottom-[5px] text-[14px] text-[#bdbdbd]">CSDN @[小瓶]</span>
  </footer>
);

const App: React.FC = () => (
  <div className="h-screen overflow-hidden bg-[#0f0f0f] p-[2px] font-['Roboto','Noto_Sans_CJK_SC',sans-serif]">
    <div className="flex h-full flex-col border border-[#2f2f2f] bg-[#151515]">
      <TitleBar />
      <Toolbar />
      <div className="flex min-h-0 flex-1 gap-[5px] p-1">
        <div className="flex w-[249px] shrink-0 flex-col">
          <PalettePanel />
          <HierarchyPanel />
        </div>
        <DesignerView />
        <DetailsPanel />
      </div>
      <StatusBar />
    </div>
  </div>
);

export default App;
